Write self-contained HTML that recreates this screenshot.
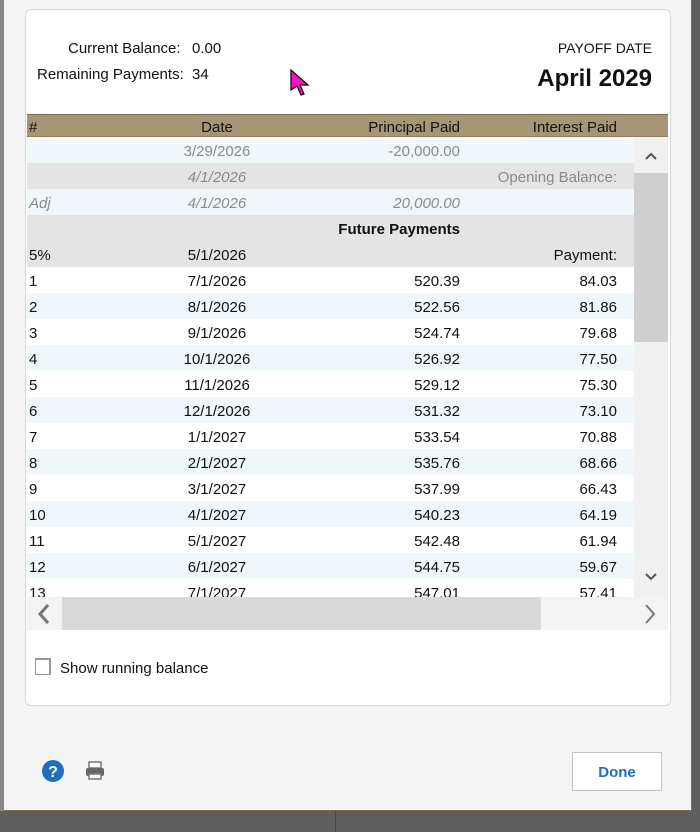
<!DOCTYPE html>
<html><head><meta charset="utf-8"><style>
*{margin:0;padding:0;box-sizing:border-box}
body{width:700px;height:832px;background:#5f5f5f;font-family:"Liberation Sans",sans-serif;font-size:15px;color:#111;position:relative;overflow:hidden}
.abs{position:absolute}
#dlg{left:4px;top:0;width:688px;height:811px;background:#f4f4f4;border-right:1px solid #7a6a48;border-bottom:1px solid #7a6a48}
#card{left:25px;top:9px;width:646px;height:697px;background:#fff;border:1px solid #d8d8d8;border-radius:6px}
.r{position:absolute;left:27px;width:607px;height:26px}
.r span{position:absolute;top:6px;white-space:nowrap}
.c0{left:2px}
.c1{left:140px;width:100px;text-align:center}
.c2{right:174px;text-align:right}
.c3{right:17px;text-align:right}
.g{color:#8a8a8a;font-style:italic}
.gn{color:#8a8a8a}
</style></head><body>
<div class="abs" style="left:0;top:0;width:4px;height:811px;background:#888"></div>
<div class="abs" style="left:335px;top:811px;width:1px;height:21px;background:#444"></div>
<div id="dlg" class="abs"></div>
<div id="card" class="abs"></div>
<div class="abs" style="left:68px;top:40px">Current Balance:</div>
<div class="abs" style="left:192px;top:40px">0.00</div>
<div class="abs" style="left:37px;top:66px">Remaining Payments:</div>
<div class="abs" style="left:192px;top:66px">34</div>
<div class="abs" style="right:48px;top:40px;font-size:14px">PAYOFF DATE</div>
<div class="abs" style="right:48px;top:65px;font-size:24px;font-weight:bold">April 2029</div>
<svg class="abs" style="left:289px;top:69px" width="24" height="30"><path d="M2 1 L2 21 L8 17 L12 26 L15 25 L11 16 L19 16 Z" fill="#ff10c8" stroke="#000" stroke-width="1.2"/></svg>

<div class="abs" style="left:27px;top:114px;width:641px;height:23px;background:#a69676;border-top:1px solid #7d6f55;border-bottom:1px solid #8d7e60"></div>
<div class="r" style="top:114px;height:23px"><span class="c0" style="top:5px">#</span><span class="c1" style="top:5px">Date</span><span class="c2" style="top:5px">Principal Paid</span><span class="c3" style="top:5px">Interest Paid</span></div>

<div class="r" style="top:137px;background:#eff7fb"><span class="c1 gn">3/29/2026</span><span class="c2 gn">-20,000.00</span></div>
<div class="r" style="top:163px;background:#e4e4e4"><span class="c1 g">4/1/2026</span><span class="c3 gn">Opening Balance:</span></div>
<div class="r" style="top:189px;background:#eff7fb"><span class="c0 g">Adj</span><span class="c1 g">4/1/2026</span><span class="c2 g">20,000.00</span></div>
<div class="r" style="top:215px;background:#e4e4e4"><span class="c2" style="font-weight:bold;font-size:15px">Future Payments</span></div>
<div class="r" style="top:241px;background:#e4e4e4"><span class="c0">5%</span><span class="c1">5/1/2026</span><span class="c3">Payment:</span></div>

<div class="r" style="top:267px;background:#fff"><span class="c0">1</span><span class="c1">7/1/2026</span><span class="c2">520.39</span><span class="c3">84.03</span></div>
<div class="r" style="top:293px;background:#eff7fb"><span class="c0">2</span><span class="c1">8/1/2026</span><span class="c2">522.56</span><span class="c3">81.86</span></div>
<div class="r" style="top:319px;background:#fff"><span class="c0">3</span><span class="c1">9/1/2026</span><span class="c2">524.74</span><span class="c3">79.68</span></div>
<div class="r" style="top:345px;background:#eff7fb"><span class="c0">4</span><span class="c1">10/1/2026</span><span class="c2">526.92</span><span class="c3">77.50</span></div>
<div class="r" style="top:371px;background:#fff"><span class="c0">5</span><span class="c1">11/1/2026</span><span class="c2">529.12</span><span class="c3">75.30</span></div>
<div class="r" style="top:397px;background:#eff7fb"><span class="c0">6</span><span class="c1">12/1/2026</span><span class="c2">531.32</span><span class="c3">73.10</span></div>
<div class="r" style="top:423px;background:#fff"><span class="c0">7</span><span class="c1">1/1/2027</span><span class="c2">533.54</span><span class="c3">70.88</span></div>
<div class="r" style="top:449px;background:#eff7fb"><span class="c0">8</span><span class="c1">2/1/2027</span><span class="c2">535.76</span><span class="c3">68.66</span></div>
<div class="r" style="top:475px;background:#fff"><span class="c0">9</span><span class="c1">3/1/2027</span><span class="c2">537.99</span><span class="c3">66.43</span></div>
<div class="r" style="top:501px;background:#eff7fb"><span class="c0">10</span><span class="c1">4/1/2027</span><span class="c2">540.23</span><span class="c3">64.19</span></div>
<div class="r" style="top:527px;background:#fff"><span class="c0">11</span><span class="c1">5/1/2027</span><span class="c2">542.48</span><span class="c3">61.94</span></div>
<div class="r" style="top:553px;background:#eff7fb"><span class="c0">12</span><span class="c1">6/1/2027</span><span class="c2">544.75</span><span class="c3">59.67</span></div>
<div class="r" style="top:579px;height:18px;overflow:hidden;background:#fff"><span class="c0">13</span><span class="c1">7/1/2027</span><span class="c2">547.01</span><span class="c3">57.41</span></div>

<div class="abs" style="left:634px;top:137px;width:34px;height:460px;background:#f0f0f0"></div>
<div class="abs" style="left:634px;top:173px;width:34px;height:169px;background:#cfcfcf"></div>
<svg class="abs" style="left:644px;top:150px" width="14" height="12"><path d="M2 9 L7 4 L12 9" fill="none" stroke="#555" stroke-width="2"/></svg>
<svg class="abs" style="left:644px;top:571px" width="14" height="12"><path d="M2 3 L7 8 L12 3" fill="none" stroke="#555" stroke-width="2"/></svg>

<div class="abs" style="left:27px;top:597px;width:641px;height:33px;background:#f3f3f3"></div>
<div class="abs" style="left:62px;top:597px;width:479px;height:33px;background:#d9d9d9"></div>
<svg class="abs" style="left:34px;top:602px" width="20" height="24"><path d="M14 3 L6 12 L14 21" fill="none" stroke="#777" stroke-width="3"/></svg>
<svg class="abs" style="left:640px;top:602px" width="20" height="24"><path d="M6 3 L14 12 L6 21" fill="none" stroke="#777" stroke-width="2"/></svg>

<div class="abs" style="left:35px;top:658px;width:16px;height:17px;border:1px solid #999;border-top-width:2px;border-right-width:2px;background:#fff"></div>
<div class="abs" style="left:60px;top:660px">Show running balance</div>

<svg class="abs" style="left:41px;top:759px" width="24" height="24"><circle cx="12" cy="12" r="11" fill="#1e6fc0"/><text x="12" y="18" text-anchor="middle" font-family="Liberation Sans" font-weight="bold" font-size="16" fill="#fff">?</text></svg>
<svg class="abs" style="left:84px;top:761px" width="22" height="20"><rect x="5" y="1" width="12" height="6" fill="#fff" stroke="#777" stroke-width="1.5"/><rect x="2" y="7" width="18" height="8" rx="2" fill="#666"/><rect x="5" y="13" width="12" height="5" fill="#fff" stroke="#777" stroke-width="1.5"/></svg>

<div class="abs" style="left:572px;top:752px;width:90px;height:39px;border:1px solid #c4c4c4;background:#fff;color:#1e6fc0;font-weight:bold;text-align:center;line-height:39px">Done</div>
</body></html>
